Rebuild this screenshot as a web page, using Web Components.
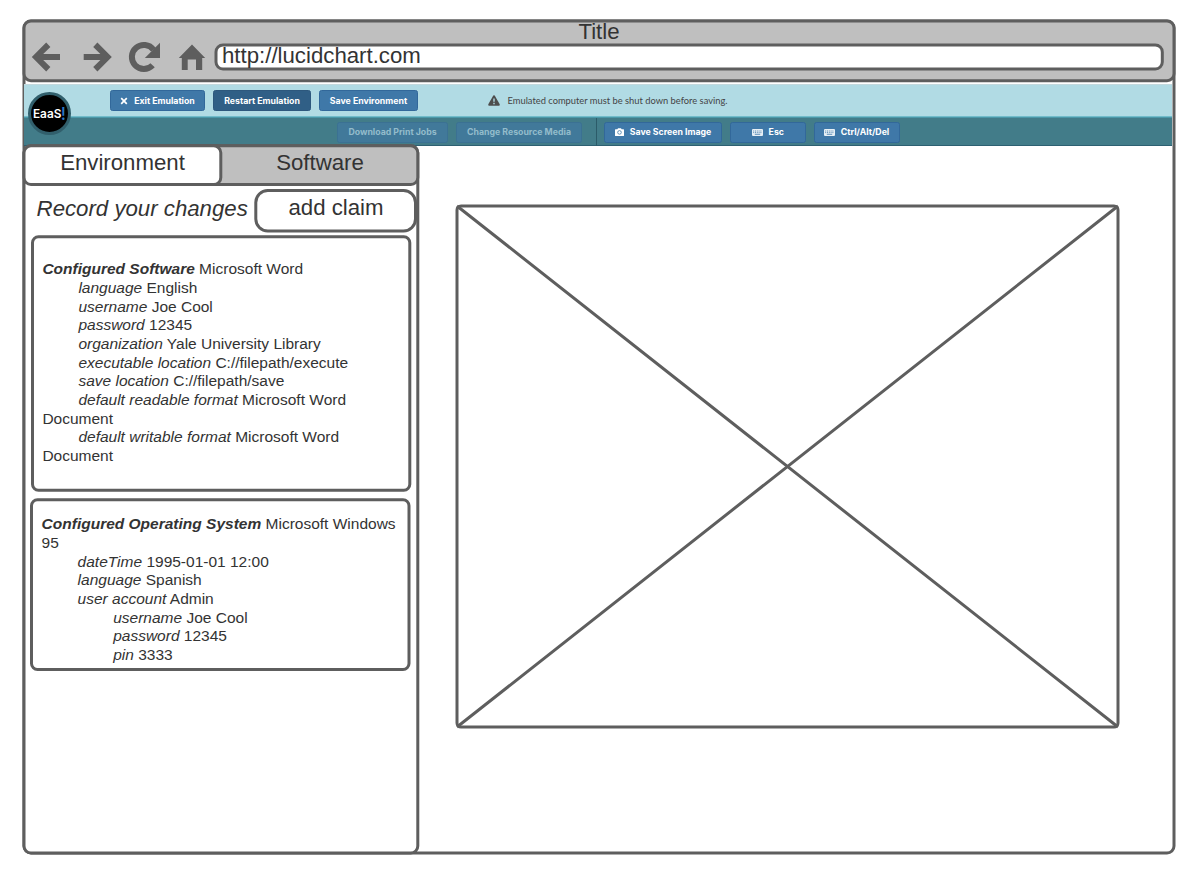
<!DOCTYPE html>
<html lang="en">
<head>
<meta charset="utf-8">
<title>Emulation wireframe</title>
<style>
body{margin:0;background:#fff;font-family:"Liberation Sans",Arial,sans-serif;color:#333}
</style>
</head>
<body>
<app-window></app-window>
<script>
const define = (name, html, setup) => {
  const t = document.createElement('template');
  t.innerHTML = html;
  customElements.define(name, class extends HTMLElement {
    constructor() {
      super();
      this.attachShadow({mode: 'open'}).append(t.content.cloneNode(true));
    }
    connectedCallback() { if (setup) setup(this, this.shadowRoot); }
  });
};

/* Rounded outline behind its parent; box = "x1 y1 x2 y2 radius", stroke centre lines */
define('wire-frame', `
<style>:host{position:absolute;inset:0;z-index:-1;pointer-events:none}
svg{display:block;width:100%;height:100%;overflow:visible}
rect{stroke:#5e5e5e;stroke-width:3}</style>
<svg><rect/></svg>`, (el, root) => {
  const [x, y, x2, y2, r] = el.getAttribute('box').split(' ').map(Number);
  const q = root.querySelector('rect');
  Object.entries({x, y, width: x2 - x, height: y2 - y, rx: r, fill: el.getAttribute('fill') || '#fff'})
    .forEach(([k, v]) => q.setAttribute(k, v));
});

define('nav-icons', `
<style>:host{display:block;width:178px;height:34px}svg{display:block}</style>
<svg width="178" height="34" viewBox="30 40 178 34" fill="#5e5e5e">
<path d="M31.8 57 46.2 42.6 50.4 47 43.2 54H60v6H43.2l7.2 7-4.2 4.4z"/>
<path d="M111.8 57 97.4 42.6 93.2 47l7.2 7H83.7v6h16.7l-7.2 7 4.2 4.4z"/>
<path d="M153.5 49.8A12 12 0 1 0 152.6 65.2" fill="none" stroke="#5e5e5e" stroke-width="6"/>
<path d="M160 42.7V58H144.8z"/>
<path d="M192 44.5 205.2 58H202.2V70H196V59.5H187.7V70H181.8V58H178.8z"/>
</svg>`);

define('address-bar', `
<style>:host{position:relative;isolation:isolate;display:block;width:950px;height:28px;line-height:26px;font-size:22.22px;white-space:nowrap}
span{display:block;padding-left:8px}</style>
<wire-frame box="2 2 948.3 26 7"></wire-frame><span><slot></slot></span>`);

define('browser-chrome', `
<style>:host{position:relative;isolation:isolate;display:flex;flex-direction:column;height:65px}
.t{text-align:center;font-size:22.22px;line-height:26px;height:24px}
.r{display:flex;align-items:flex-start}
nav-icons{margin:-3px 6px 0 8px}</style>
<wire-frame box="2 2 1152 61.7 7" fill="#bfbfbf"></wire-frame>
<div class="t"><slot name="title"></slot></div>
<div class="r"><nav-icons></nav-icons><address-bar><slot></slot></address-bar></div>`);

define('tool-button', `
<style>:host{box-sizing:border-box;display:flex;align-items:center;justify-content:center;gap:6px;height:21px;
border:1px solid #32689a;border-radius:2.5px;background:#3f78a8;color:#fff;font:700 8.75px/12px Inter,sans-serif;white-space:nowrap}
:host([dark]){background:#305f86;border-color:#2d587d}
:host([off]){background:#41799a;border-color:#3b7193;color:#93bccb}
::slotted(svg){display:block}</style><slot name="icon"></slot><span><slot></slot></span>`);

define('eaasi-logo', `
<style>:host{box-sizing:border-box;position:absolute;left:4px;top:8px;width:43px;height:43px;border:3px solid #315f6c;border-radius:50%;background:#000;
display:flex;align-items:center;justify-content:center;color:#fff;font:600 11.8px/16px Inter,sans-serif}
b{color:#2b78c5;font-weight:500;font-size:17px;line-height:16px;margin-left:-.5px}</style><span>EaaS</span><b>!</b>`);

define('emulation-toolbar', `
<style>:host{position:relative;display:block;width:1148px;height:62px;margin-left:2px}
.a,.b{display:flex;box-sizing:border-box}
.a{height:34px;padding:6px 0 0 86px;gap:8px;background:linear-gradient(#c4d9dd 0 1px,#b1dbe4 1px 32px,#72bccb 32px 33px,#4b98a8 33px)}
.b{height:28px;padding:3.5px 0 0 313px;gap:8px;background:linear-gradient(#427c89 27px,#2d6072 27px)}
.m{display:flex;align-items:center;gap:7.5px;margin-left:62px;height:21px;font:9.33px/12px Lato,sans-serif;color:#444;white-space:nowrap}
i{width:1px;height:28px;margin:-3.5px -1px 0 6px;background:#2c5b69}
svg{display:block}</style>
<div class="a">
<tool-button style="width:95px"><svg slot="icon" width="8" height="8" viewBox="0 0 8 8"><path d="M1.2 1.2 6.8 6.8M6.8 1.2 1.2 6.8" stroke="#fff" stroke-width="1.7"/></svg>Exit Emulation</tool-button>
<tool-button dark style="width:98px">Restart Emulation</tool-button>
<tool-button style="width:99px">Save Environment</tool-button>
<div class="m"><svg width="12" height="11" viewBox="0 0 12 11"><path d="M5.3.6Q6-.3 6.7.6L11.7 9.3Q12 10.6 10.9 10.7H1.1Q0 10.6.3 9.3z" fill="#4d4d4d"/><path d="M6 3.4V6.7M6 7.7V9.2" stroke="#b1dbe4" stroke-width="1.4"/></svg><span>Emulated computer must be shut down before saving.</span></div>
</div>
<div class="b">
<tool-button off style="width:111px">Download Print Jobs</tool-button>
<tool-button off style="width:126px">Change Resource Media</tool-button>
<i></i>
<tool-button style="width:118px"><svg slot="icon" width="9" height="8" viewBox="0 0 9 8"><path d="M0 1.8Q0 1.2.6 1.2H2.4L3 .2H6L6.6 1.2H8.4Q9 1.2 9 1.8V7.4Q9 8 8.4 8H.6Q0 8 0 7.4z" fill="#fff"/><circle cx="4.5" cy="4.4" r="1.8" fill="none" stroke="#3f78a8" stroke-width=".8"/></svg>Save Screen Image</tool-button>
<tool-button style="width:75.5px"><svg slot="icon" width="11" height="7" viewBox="0 0 11 7"><rect width="11" height="7" rx="1" fill="#e6eff5"/><path d="M1.2 2H9.8M1.2 3.6H9.8" stroke="#3f78a8" stroke-width=".8" stroke-dasharray="1 .8"/><path d="M2.8 5.3H8.2" stroke="#3f78a8" stroke-width=".8"/></svg>Esc</tool-button>
<tool-button style="width:86px"><svg slot="icon" width="11" height="7" viewBox="0 0 11 7"><rect width="11" height="7" rx="1" fill="#e6eff5"/><path d="M1.2 2H9.8M1.2 3.6H9.8" stroke="#3f78a8" stroke-width=".8" stroke-dasharray="1 .8"/><path d="M2.8 5.3H8.2" stroke="#3f78a8" stroke-width=".8"/></svg>Ctrl/Alt/Del</tool-button>
</div>
<eaasi-logo></eaasi-logo>`);

define('panel-tab', `
<style>:host{position:relative;isolation:isolate;display:block;box-sizing:border-box;height:42px;font-size:22.22px;line-height:37px;text-align:center}
:host([selected]){z-index:1;padding-left:1px}</style><slot name="frame"></slot><slot></slot>`);

define('claim-button', `
<style>:host{position:relative;isolation:isolate;display:block;width:164px;height:44px;font-size:22.22px;line-height:40px;text-align:center}</style>
<wire-frame box="1.8 2.5 161.5 43 12"></wire-frame><slot></slot>`);

define('claim-card', `
<style>:host{position:relative;isolation:isolate;display:block;box-sizing:border-box;font-size:15.5px;line-height:18.67px}
::slotted(p){margin:0}::slotted(.i){text-indent:36px}::slotted(.j){text-indent:71.6px}</style>
<slot name="frame"></slot><slot></slot>`);

define('side-panel', `
<style>:host{position:relative;isolation:isolate;display:flex;flex-direction:column;width:398px;margin-top:-2px}
.tabs{display:flex}
.rec{display:flex;height:46px;padding-top:2px;box-sizing:content-box}
.rec em{flex:none;width:232px;padding-left:14.6px;font-size:22.22px;line-height:42px;white-space:nowrap;box-sizing:border-box}
.c1{width:381px;height:257px;margin-left:9px;padding:26.4px 3px 0 11.4px}
.c2{width:381px;height:173px;margin:6px 0 0 8px;padding:18.4px 3px 0 11.6px}
p b{font-style:italic}</style>
<wire-frame box="2 1.8 395.8 709 7"></wire-frame>
<div class="tabs">
<panel-tab selected style="width:200px"><wire-frame slot="frame" box="2 1.8 198.8 40.5 7"></wire-frame>Environment</panel-tab>
<panel-tab style="width:196px"><wire-frame slot="frame" fill="#bfbfbf" box="-100 1.8 195.8 40.5 7"></wire-frame>Software</panel-tab>
</div>
<div class="rec"><em>Record your changes</em><claim-button>add claim</claim-button></div>
<claim-card class="c1"><wire-frame slot="frame" box="1.5 2.7 378.8 256.3 6"></wire-frame>
<p><b>Configured Software</b> Microsoft Word</p>
<p class="i"><em>language</em> English</p>
<p class="i"><em>username</em> Joe Cool</p>
<p class="i"><em>password</em> 12345</p>
<p class="i"><em>organization</em> Yale University Library</p>
<p class="i"><em>executable location</em> C://filepath/execute</p>
<p class="i"><em>save location</em> C://filepath/save</p>
<p class="i"><em>default readable format</em> Microsoft Word Document</p>
<p class="i"><em>default writable format</em> Microsoft Word Document</p>
</claim-card>
<claim-card class="c2"><wire-frame slot="frame" box="1.5 2.7 379 172.5 6"></wire-frame>
<p><b>Configured Operating System</b> Microsoft Windows 95</p>
<p class="i"><em>dateTime</em> 1995-01-01 12:00</p>
<p class="i"><em>language</em> Spanish</p>
<p class="i"><em>user account</em> Admin</p>
<p class="j"><em>username</em> Joe Cool</p>
<p class="j"><em>password</em> 12345</p>
<p class="j"><em>pin</em> 3333</p>
</claim-card>`);

define('image-placeholder', `
<style>:host{display:block;margin:58px 0 0 35px;width:665px;height:525px}svg{display:block}</style>
<svg width="665" height="525" fill="none" stroke="#5e5e5e" stroke-width="3"><rect x="2" y="2" width="661" height="521" rx="4"/><path d="M2 2 663 523M663 2 2 523"/></svg>`);

define('app-window', `
<style>:host{position:relative;isolation:isolate;display:grid;grid-template-rows:65px 62px 710px;width:1154px;margin:19px 0 0 22px}
.body{display:flex}</style>
<wire-frame box="2 2 1152 834 7"></wire-frame>
<browser-chrome><span slot="title">Title</span>http://lucidchart.com</browser-chrome>
<emulation-toolbar></emulation-toolbar>
<div class="body"><side-panel></side-panel><image-placeholder></image-placeholder></div>`);
</script>
</body>
</html>
